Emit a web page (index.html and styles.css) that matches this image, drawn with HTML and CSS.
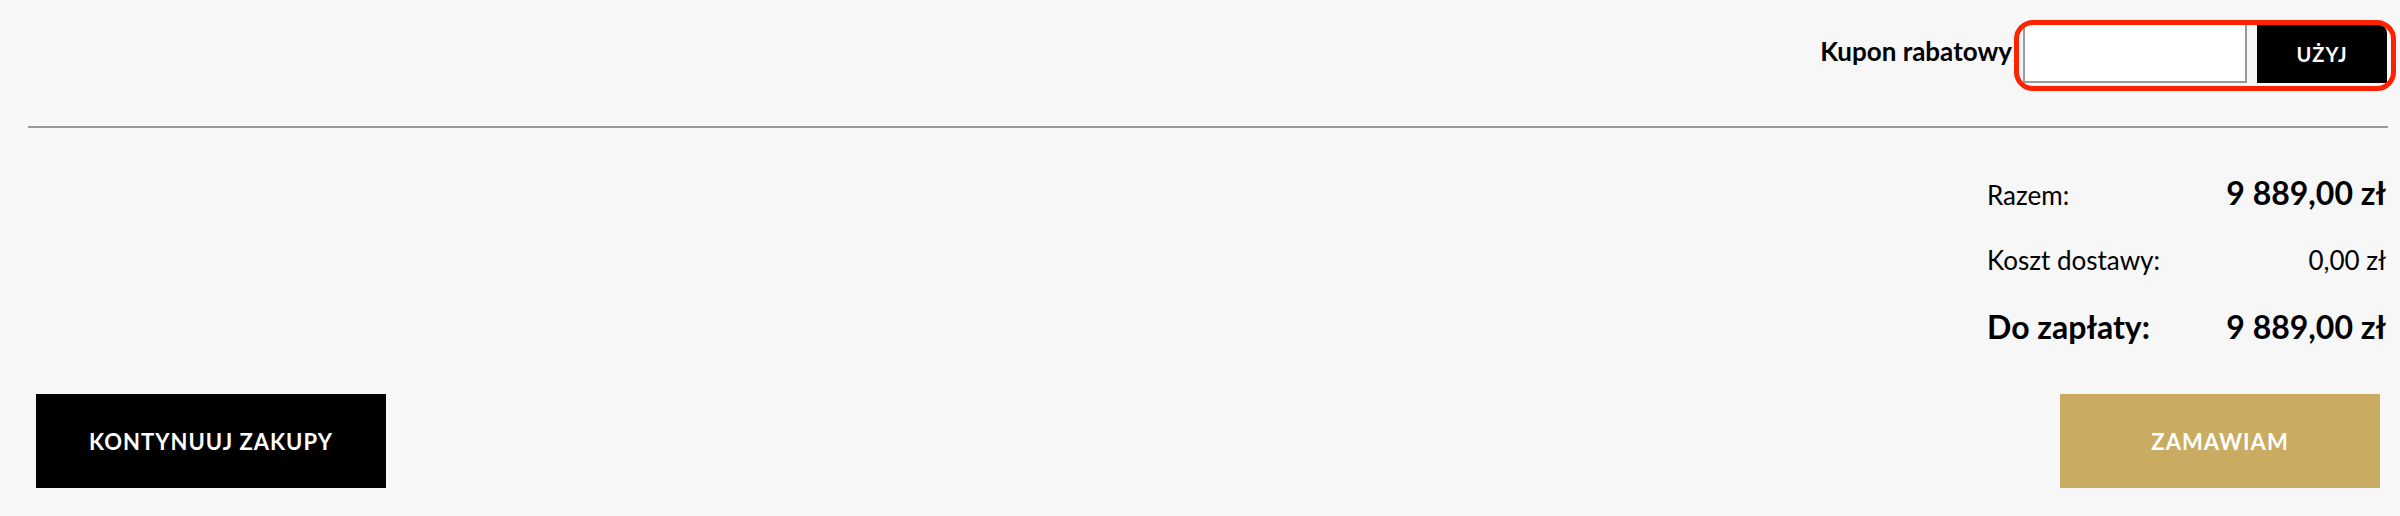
FILE: index.html
```html
<!DOCTYPE html>
<html lang="pl">
<head>
    <meta charset="UTF-8">
    <meta name="viewport" content="width=device-width, initial-scale=1.0">
    <title>Koszyk</title>
    <link rel="stylesheet" href="styles.css">
</head>
<body>
    <div class="cart-footer">
        <div class="coupon-row">
            <label class="coupon-label" for="couponCode">Kupon rabatowy</label>
            <div class="coupon-box">
                <input type="text" id="couponCode" class="coupon-input">
                <button class="coupon-btn">UŻYJ</button>
            </div>
        </div>

        <hr class="divider">

        <div class="summary">
            <div class="summary-row">
                <span class="summary-label">Razem:</span>
                <span class="summary-value big">9 889,00 zł</span>
            </div>
            <div class="summary-row">
                <span class="summary-label">Koszt dostawy:</span>
                <span class="summary-value">0,00 zł</span>
            </div>
            <div class="summary-row total">
                <span class="summary-label">Do zapłaty:</span>
                <span class="summary-value big">9 889,00 zł</span>
            </div>
        </div>

        <div class="actions">
            <button class="btn btn-black">KONTYNUUJ ZAKUPY</button>
            <button class="btn btn-gold">ZAMAWIAM</button>
        </div>
    </div>
</body>
</html>
```

FILE: styles.css
```css
body {
    margin: 0;
    background-color: #f7f7f7;
    font-family: Lato, "Open Sans", Arial, sans-serif;
    color: #000;
}
.cart-footer {
    padding: 25px 12px 0 28px;
}
.coupon-row {
    display: flex;
    justify-content: flex-end;
    align-items: center;
    margin-right: -3px;
}
.coupon-label {
    font-size: 26px;
    font-weight: bold;
    line-height: 1;
    margin-right: 7px;
    padding-bottom: 10px;
}
.coupon-box {
    display: flex;
    gap: 10px;
    padding: 0 4px 3px 4px;
    outline: 5px solid #ff2200;
    border-radius: 14px;
}
.coupon-input {
    box-sizing: border-box;
    width: 224px;
    height: 58px;
    margin: 0;
    border: 2px solid #9a9a9a;
    border-top: 0;
    background-color: white;
    font-size: 22px;
}
.coupon-btn {
    width: 130px;
    height: 58px;
    border: 0;
    background-color: black;
    color: white;
    font-family: Lato, "Open Sans", Arial, sans-serif;
    font-size: 20px;
    font-weight: bold;
    letter-spacing: 1px;
    border-top-right-radius: 8px;
}
.divider {
    margin: 40px 0 0 0;
    border: 0;
    border-top: 2px solid #999;
}
.summary {
    width: 399px;
    margin: 45px 2px 0 auto;
}
.summary-row {
    display: flex;
    justify-content: space-between;
    align-items: baseline;
    line-height: 40px;
    height: 40px;
    margin-bottom: 27px;
    font-size: 26px;
}
.summary-row.total {
    margin-bottom: 0;
}
.summary-row.total .summary-label {
    font-size: 32px;
    font-weight: bold;
}
.summary-value.big {
    font-size: 32px;
    font-weight: bold;
}
.actions {
    display: flex;
    justify-content: space-between;
    margin-top: 47px;
    padding: 0 8px;
}
.btn {
    height: 94px;
    border: 0;
    color: white;
    font-family: Lato, "Open Sans", Arial, sans-serif;
    font-size: 22px;
    font-weight: bold;
    letter-spacing: 1px;
    cursor: pointer;
}
.btn-black {
    width: 350px;
    background-color: black;
}
.btn-gold {
    width: 320px;
    background-color: #c9ab61;
}
```
